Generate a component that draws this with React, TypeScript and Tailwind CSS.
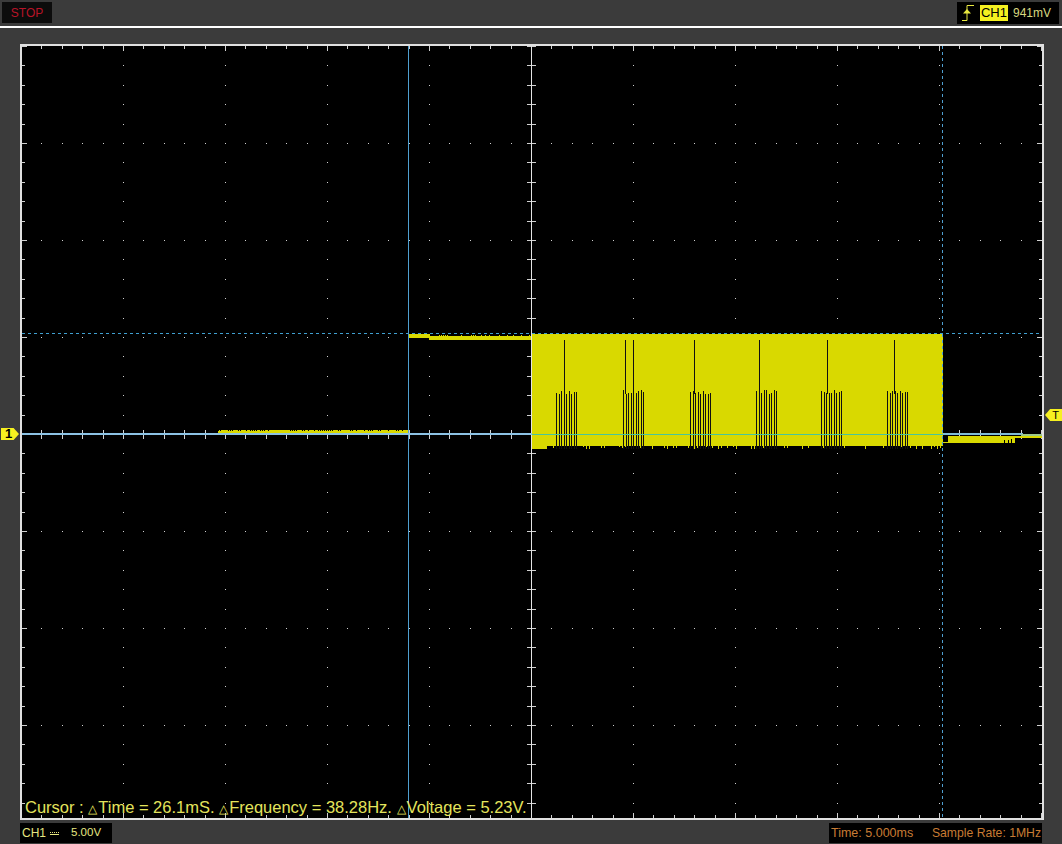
import { useMemo } from 'react';

const CX = 531;
const CY = 434;
const DX = 20.4;
const DY = 19.4;
const YELLOW = '#d9d900';
const SANS = "font-['Liberation_Sans',Arial,sans-serif]";

// small repeatable noise so the trace edges stay jagged but stable
function noise(i: number) {
  const v = Math.sin(i * 12.9898) * 43758.5453;
  return v - Math.floor(v);
}

const BURSTS = [
  { from: 556, to: 577, spikes: [564] },
  { from: 623, to: 643, spikes: [625, 633] },
  { from: 690, to: 710, spikes: [694] },
  { from: 756, to: 776, spikes: [759] },
  { from: 821, to: 841, spikes: [827] },
  { from: 887, to: 907, spikes: [894] },
];

function Grid() {
  const cols: number[] = [];
  const rows: number[] = [];
  for (let k = -25; k <= 25; k++) cols.push(CX + k * DX);
  for (let k = -20; k <= 19; k++) rows.push(CY + k * DY);
  const majorX = cols.filter((_, i) => i % 5 === 0);
  const majorY = rows.filter((_, i) => i % 5 === 0);

  return (
    <g fill="#d0d0d0" shapeRendering="crispEdges">
      {majorX.flatMap((x) =>
        rows.map((y) => <rect key={`v${x}-${y}`} x={Math.round(x)} y={Math.round(y)} width="1" height="1" />),
      )}
      {majorY.flatMap((y) =>
        cols.map((x) => <rect key={`h${x}-${y}`} x={Math.round(x)} y={Math.round(y)} width="1" height="1" />),
      )}
      {cols.map((x, i) => (
        <g key={`t${x}`}>
          <rect x={Math.round(x)} y="46" width="1" height={i % 5 === 0 ? 5 : 3} />
          <rect x={Math.round(x)} y={i % 5 === 0 ? 813 : 815} width="1" height={i % 5 === 0 ? 5 : 3} />
          <rect x={Math.round(x)} y={CY - 4} width="1" height="9" />
        </g>
      ))}
      {rows.map((y, i) => (
        <g key={`s${y}`}>
          <rect x="22" y={Math.round(y)} width={i % 5 === 0 ? 5 : 3} height="1" />
          <rect x={i % 5 === 0 ? 1037 : 1039} y={Math.round(y)} width={i % 5 === 0 ? 5 : 3} height="1" />
          <rect x={CX - 4} y={Math.round(y)} width="9" height="1" />
        </g>
      ))}
      <rect x={CX} y="46" width="1" height="772" fill="#e4e4e4" />
    </g>
  );
}

function Trace() {
  const jags = useMemo(() => {
    const out: { x: number; y: number; h: number; c: string }[] = [];
    // low level before the first cursor
    for (let x = 218; x < 408; x += 2) {
      if (noise(x) > 0.55) out.push({ x, y: 430, h: 1, c: '#000' });
    }
    // notches along the high level
    for (let x = 431; x < 531; x += 2) {
      if (noise(x) > 0.7) out.push({ x, y: 335, h: 1, c: YELLOW });
    }
    // spill below the block
    for (let x = 547; x < 942; x += 3) {
      if (noise(x + 7) > 0.62) out.push({ x, y: 446, h: 1 + Math.round(noise(x) * 2), c: YELLOW });
    }
    return out;
  }, []);

  return (
    <g shapeRendering="crispEdges">
      <rect x="218" y="430" width="190" height="5" fill={YELLOW} />
      <rect x="409" y="334" width="21" height="4" fill={YELLOW} />
      <rect x="429" y="336" width="102" height="4" fill={YELLOW} />
      <rect x="532" y="334" width="410" height="112" fill={YELLOW} />
      <rect x="532" y="446" width="15" height="3" fill={YELLOW} />
      <rect x="943" y="436" width="72" height="7" fill={YELLOW} />
      <rect x="1015" y="436" width="27" height="2" fill={YELLOW} />
      <rect x="943" y="436" width="5" height="6" fill="#000" />
      <rect x="1004" y="440" width="1" height="3" fill="#000" />
      <rect x="1008" y="440" width="1" height="3" fill="#000" />
      <rect x="1011" y="439" width="1" height="4" fill="#000" />
      {jags.map((j, i) => (
        <rect key={i} x={j.x} y={j.y} width="1" height={j.h} fill={j.c} />
      ))}
      {BURSTS.map((b) => {
        const bars: number[] = [];
        for (let x = b.from; x <= b.to; x += 2.5) bars.push(Math.round(x));
        return (
          <g key={b.from}>
            {bars.map((x, i) => {
              const top = 390 + Math.round(noise(x) * 4);
              return <rect key={i} x={x} y={top} width="1" height={449 - top} fill="#111" />;
            })}
            {b.spikes.map((x) => (
              <rect key={x} x={x} y="340" width="1" height="54" fill="#111" />
            ))}
          </g>
        );
      })}
    </g>
  );
}

function Cursors() {
  return (
    <g shapeRendering="crispEdges">
      <line x1="22" x2="1042" y1="333.5" y2="333.5" stroke="#3f9fd0" strokeDasharray="3 3" />
      <rect x="942" y="334" width="1" height="112" fill={YELLOW} />
      <line x1="942.5" x2="942.5" y1="46" y2="818" stroke="#4f9fd0" strokeDasharray="3 3" />
      <rect x="408" y="46" width="1" height="772" fill="#4f9fd0" />
      <rect x="22" y="433" width="510" height="2" fill="#8cc2e4" />
      <rect x="532" y="434" width="411" height="1" fill="#48c49c" />
      <rect x="943" y="433" width="80" height="2" fill="#7fbcd8" />
      <rect x="1021" y="434" width="21" height="2" fill="#9cc88c" />
    </g>
  );
}

function TriggerEdge() {
  return (
    <svg width="16" height="18" viewBox="0 0 16 18" className="shrink-0">
      <path d="M1 16.5h5V1.5H13" fill="none" stroke="#e8e840" strokeWidth="1" />
      <path d="M6 5l-4 4.5h8z" fill="#e8e840" />
    </svg>
  );
}

function Delta() {
  return <span className="text-[12px] mr-px">△</span>;
}

export default function App() {
  return (
    <div className={`relative w-[1062px] h-[844px] overflow-hidden bg-[#3b3b3b] flex flex-col ${SANS}`}>
      {/* top bar */}
      <div className="h-[26px] shrink-0 flex items-start justify-between pt-0.5 pl-0.5 pr-[3px]">
        <div className="w-[50px] h-[21px] bg-[#0c0c0c] flex items-center justify-center text-[12px] text-[#b81428]">
          STOP
        </div>
        <div className="w-[102px] h-[22px] bg-black flex items-center pl-[4px] gap-[3px]">
          <TriggerEdge />
          <span className="w-[28px] h-[16px] bg-[#f4f020] text-black text-[13px] leading-[16px] text-center">CH1</span>
          <span className="ml-[2px] text-[12px] text-[#d8d880]">941mV</span>
        </div>
      </div>
      <div className="h-[2px] shrink-0 bg-white" />

      {/* scope screen */}
      <div className="relative mt-4 ml-5 w-[1024px] h-[776px] shrink-0 border-2 border-[#e0e0e0] bg-black">
        <svg width="1020" height="772" viewBox="22 46 1020 772" className="block">
          <Grid />
          <Trace />
          <Cursors />
        </svg>
        <div className="absolute left-[3px] -bottom-px text-[16.5px] leading-[20px] text-[#e4e45c] whitespace-nowrap">
          Cursor : <Delta />Time = 26.1mS. <Delta />Frequency = 38.28Hz. <Delta />Voltage = 5.23V.
        </div>
      </div>

      {/* bottom bar */}
      <div className="flex-1 flex items-start justify-between pt-[3px] pl-5 pr-5">
        <div className="w-[92px] h-[20px] bg-black flex items-center pl-[2px] text-[12px] text-[#e6e680]">
          <span>CH1</span>
          <span className="ml-[4px] flex flex-col gap-px w-[9px]">
            <span className="block h-px border-t border-dotted border-[#e6e680]" />
            <span className="block h-px bg-[#e6e680]" />
          </span>
          <span className="ml-[12px] text-[11.5px]">5.00V</span>
        </div>
        <div className="w-[213px] h-[20px] bg-black flex items-center justify-between pl-[2px] pr-px text-[12.5px] text-[#c87c34]">
          <span>Time: 5.000ms</span>
          <span className="text-[12.2px]">Sample Rate: 1MHz</span>
        </div>
      </div>

      {/* channel and trigger level markers */}
      <div className="absolute left-px top-[428px] w-[18px] h-[12px] bg-[#f6f020] [clip-path:polygon(0_0,70%_0,100%_50%,70%_100%,0_100%)] text-black text-[13px] leading-[12px] font-bold text-center pr-[3px]">
        1
      </div>
      <div className="absolute left-[1045px] top-[409px] w-[17px] h-[12px] bg-[#f6f020] [clip-path:polygon(30%_0,100%_0,100%_100%,30%_100%,0_50%)] text-black text-[11px] leading-[12px] text-center pl-[4px]">
        T
      </div>
    </div>
  );
}
